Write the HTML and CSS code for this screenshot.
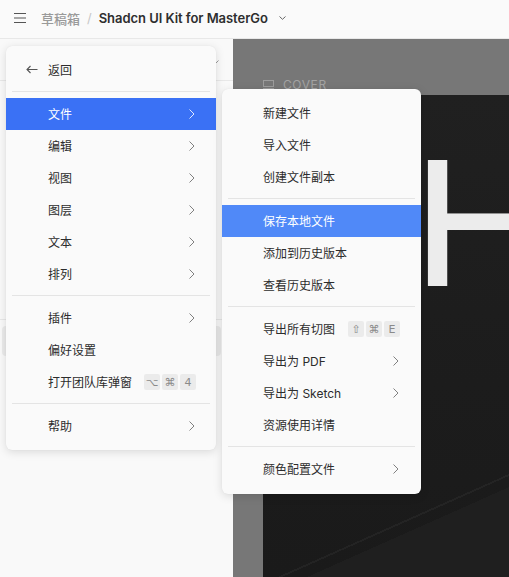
FILE: index.html
```html
<!DOCTYPE html>
<html lang="zh-CN">
<head>
<meta charset="utf-8">
<title>Shadcn UI Kit for MasterGo</title>
<link rel="stylesheet" href="styles.css">
</head>
<body>
<div class="app">
  <header class="topbar">
    <svg class="burger" width="12" height="10" viewBox="0 0 12 10"><path d="M0 0.5H12M0 5H12M0 9.5H12" stroke="#555" stroke-width="1"/></svg>
    <span class="crumb">草稿箱</span>
    <span class="sep">/</span>
    <span class="doc">Shadcn UI Kit for MasterGo</span>
    <svg class="caret" width="7" height="4" viewBox="0 0 7 4"><path d="M0.5 0.5L3.5 3.3L6.5 0.5" fill="none" stroke="#666" stroke-width="1"/></svg>
  </header>

  <div class="workspace">
    <aside class="panel">
      <div class="panel-head">
        <svg class="panel-caret" width="8" height="5" viewBox="0 0 8 5"><path d="M0.5 0.5L4 4L7.5 0.5" fill="none" stroke="#999" stroke-width="1"/></svg>
      </div>
      <div class="pages"></div>
      <div class="layer-row"></div>
    </aside>

    <main class="canvas">
      <div class="frame-label">
        <svg width="11" height="10" viewBox="0 0 11 10"><rect x="0.5" y="0.5" width="10" height="6" fill="none" stroke="#9c9c9c"/><path d="M0 8.5H11" stroke="#9c9c9c"/></svg>
        <span>COVER</span>
      </div>
      <div class="frame">
        <div class="frame-title">H</div>
      </div>
    </main>
  </div>

  <nav class="menu main-menu">
    <div class="item back">
      <svg class="back-arrow" width="12" height="9" viewBox="0 0 12 9"><path d="M11.5 4.5H1M4.5 1L1 4.5L4.5 8" fill="none" stroke="#555" stroke-width="1.1"/></svg>
      <span>返回</span>
    </div>
    <div class="divider"></div>
    <div class="item active"><span>文件</span><svg class="chev" width="6" height="10" viewBox="0 0 6 10"><path d="M0.5 0.5L5 5L0.5 9.5" fill="none" stroke="currentColor"/></svg></div>
    <div class="item"><span>编辑</span><svg class="chev" width="6" height="10" viewBox="0 0 6 10"><path d="M0.5 0.5L5 5L0.5 9.5" fill="none" stroke="currentColor"/></svg></div>
    <div class="item"><span>视图</span><svg class="chev" width="6" height="10" viewBox="0 0 6 10"><path d="M0.5 0.5L5 5L0.5 9.5" fill="none" stroke="currentColor"/></svg></div>
    <div class="item"><span>图层</span><svg class="chev" width="6" height="10" viewBox="0 0 6 10"><path d="M0.5 0.5L5 5L0.5 9.5" fill="none" stroke="currentColor"/></svg></div>
    <div class="item"><span>文本</span><svg class="chev" width="6" height="10" viewBox="0 0 6 10"><path d="M0.5 0.5L5 5L0.5 9.5" fill="none" stroke="currentColor"/></svg></div>
    <div class="item"><span>排列</span><svg class="chev" width="6" height="10" viewBox="0 0 6 10"><path d="M0.5 0.5L5 5L0.5 9.5" fill="none" stroke="currentColor"/></svg></div>
    <div class="divider"></div>
    <div class="item"><span>插件</span><svg class="chev" width="6" height="10" viewBox="0 0 6 10"><path d="M0.5 0.5L5 5L0.5 9.5" fill="none" stroke="currentColor"/></svg></div>
    <div class="item"><span>偏好设置</span></div>
    <div class="item"><span>打开团队库弹窗</span><span class="keys"><kbd>⌥</kbd><kbd>⌘</kbd><kbd>4</kbd></span></div>
    <div class="divider"></div>
    <div class="item"><span>帮助</span><svg class="chev" width="6" height="10" viewBox="0 0 6 10"><path d="M0.5 0.5L5 5L0.5 9.5" fill="none" stroke="currentColor"/></svg></div>
  </nav>

  <nav class="menu sub-menu">
    <div class="item"><span>新建文件</span></div>
    <div class="item"><span>导入文件</span></div>
    <div class="item"><span>创建文件副本</span></div>
    <div class="divider"></div>
    <div class="item hover"><span>保存本地文件</span></div>
    <div class="item"><span>添加到历史版本</span></div>
    <div class="item"><span>查看历史版本</span></div>
    <div class="divider"></div>
    <div class="item"><span>导出所有切图</span><span class="keys"><kbd>⇧</kbd><kbd>⌘</kbd><kbd>E</kbd></span></div>
    <div class="item"><span>导出为 PDF</span><svg class="chev" width="6" height="10" viewBox="0 0 6 10"><path d="M0.5 0.5L5 5L0.5 9.5" fill="none" stroke="currentColor"/></svg></div>
    <div class="item"><span>导出为 Sketch</span><svg class="chev" width="6" height="10" viewBox="0 0 6 10"><path d="M0.5 0.5L5 5L0.5 9.5" fill="none" stroke="currentColor"/></svg></div>
    <div class="item"><span>资源使用详情</span></div>
    <div class="divider"></div>
    <div class="item"><span>颜色配置文件</span><svg class="chev" width="6" height="10" viewBox="0 0 6 10"><path d="M0.5 0.5L5 5L0.5 9.5" fill="none" stroke="currentColor"/></svg></div>
  </nav>
</div>
</body>
</html>
```

FILE: styles.css
```css
* {
  box-sizing: border-box;
}

html, body {
  margin: 0;
  padding: 0;
}

body {
  background: #f9f9f9;
  font-family: "Inter", "Noto Sans CJK SC", sans-serif;
  color: #2c2c2c;
}

.app {
  position: relative;
  width: 509px;
  height: 577px;
  display: flex;
  flex-direction: column;
  overflow: hidden;
}

/* top bar */
.topbar {
  height: 39px;
  flex: none;
  display: flex;
  align-items: center;
  padding: 0 0 2px 14px;
  border-bottom: 1px solid #e8e8e8;
  background: #fafafa;
  font-size: 13px;
}

.burger {
  margin-right: 15px;
}

.crumb {
  color: #9a9a9a;
  font-weight: 500;
}

.sep {
  color: #c8c8c8;
  margin: 0 7px 0 7px;
}

.doc {
  color: #2e2e2e;
  font-weight: 600;
  letter-spacing: -0.05px;
}

.caret {
  margin-left: 11px;
}

/* layout below the bar */
.workspace {
  flex: 1;
  display: flex;
  min-height: 0;
}

.panel {
  width: 233px;
  flex: none;
  background: #f9f9f9;
  display: flex;
  flex-direction: column;
}

.panel-head {
  height: 42px;
  border-bottom: 1px solid #e8e8e8;
  display: flex;
  align-items: center;
  justify-content: flex-end;
  padding: 6px 14px 0 0;
}

.pages {
  height: 239px;
  border-bottom: 1px solid #e8e8e8;
}

.layer-row {
  height: 30px;
  margin: 6px 12px 0 2px;
  border-radius: 4px;
  background: #ebebeb;
}

/* canvas */
.canvas {
  flex: 1;
  background: #777777;
  padding: 37px 0 0 30px;
  display: flex;
  flex-direction: column;
  overflow: hidden;
}

.frame-label {
  height: 19px;
  display: flex;
  align-items: center;
  gap: 9px;
  padding-bottom: 2px;
  color: #a3a3a3;
  font-size: 12px;
  letter-spacing: 0.6px;
}

.frame {
  flex: 1;
  width: 400px;
  background:
    linear-gradient(156deg, transparent 0 74%, rgba(255,255,255,0.04) 74% 74.3%, transparent 74.3% 76%, #1f1f1f 76%),
    linear-gradient(180deg, #202020 0%, #1c1c1c 60%, #1a1a1a 100%);
  padding: 42px 0 0 151px;
}

.frame-title {
  font-family: "Inter", sans-serif;
  font-size: 173px;
  font-weight: 500;
  line-height: 1;
  color: #ececec;
}

/* context menus */
.menu {
  position: absolute;
  background: #fafafa;
  border-radius: 6px;
  box-shadow: 0 2px 10px rgba(0, 0, 0, 0.13), 0 0 1px rgba(0, 0, 0, 0.08);
  padding: 8px 0;
  font-size: 12px;
}

.main-menu {
  left: 6px;
  top: 46px;
  width: 210px;
}

.sub-menu {
  left: 222px;
  top: 89px;
  width: 199px;
  padding-bottom: 9px;
}

.item {
  height: 32px;
  display: flex;
  align-items: center;
  justify-content: space-between;
  padding: 0 21px 2px 42px;
  color: #2c2c2c;
}

.sub-menu .item {
  padding: 0 22px 2px 41px;
}

.chev {
  color: #808080;
  margin-top: 2px;
}

.item.back {
  justify-content: flex-start;
  padding-left: 20px;
}

.back-arrow {
  margin-right: 10px;
  margin-top: 1px;
}

.item.active {
  background: #3a71f5;
  color: #ffffff;
}

.item.active .chev {
  color: #dfe8ff;
}

.item.hover {
  background: #5089f8;
  color: #ffffff;
}

.divider {
  height: 1px;
  background: #e4e4e4;
  margin: 5px 6px 6px;
}

.keys {
  display: flex;
  gap: 2px;
  margin: 2px -1px 0 0;
}

kbd {
  width: 16px;
  height: 16px;
  border-radius: 2px;
  background: #ebebeb;
  color: #8a8a8a;
  font-family: "DejaVu Sans", sans-serif;
  font-size: 11px;
  display: flex;
  align-items: center;
  justify-content: center;
}
```
